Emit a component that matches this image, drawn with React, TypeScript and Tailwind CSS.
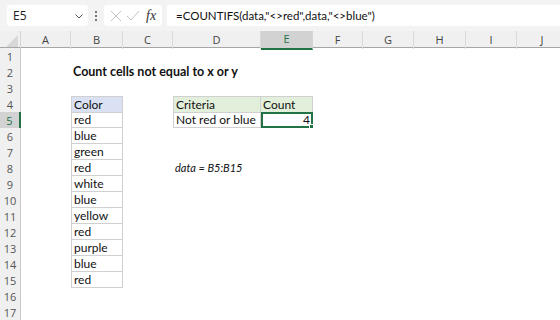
import React from "react";

const cols = ["A", "B", "C", "D", "E", "F", "G", "H", "I", "J"];
const colors = ["red", "blue", "green", "red", "white", "blue", "yellow", "red", "purple", "blue", "red"];

const cellFont = { fontFamily: "Lato, 'Open Sans', sans-serif" };

function Toolbar() {
  return (
    <div className="flex h-[31px] items-center bg-[#f3f3f3] pl-[7px]" style={{ fontFamily: "'Open Sans', 'Noto Sans', sans-serif" }}>
      {/* Name box */}
      <div className="flex h-[21px] w-[81px] items-center justify-between rounded-[3px] bg-white pl-[6px] pr-[4px] text-[12px] text-[#222]">
        <span>E5</span>
        <svg width="10" height="10" viewBox="0 0 10 10" className="text-[#555]">
          <path d="M1.5 3.5 L5 7 L8.5 3.5" fill="none" stroke="currentColor" strokeWidth="1" />
        </svg>
      </div>
      {/* dots */}
      <div className="flex w-[16px] flex-col items-center gap-[2px]">
        <span className="h-[2px] w-[2px] bg-[#777]" />
        <span className="h-[2px] w-[2px] bg-[#777]" />
        <span className="h-[2px] w-[2px] bg-[#777]" />
      </div>
      {/* fx box */}
      <div className="flex h-[21px] w-[58px] items-center rounded-[3px] bg-white pl-[6px]">
        <svg width="12" height="12" viewBox="0 0 12 12">
          <path d="M1 1 L11 11 M11 1 L1 11" stroke="#c4c4c4" strokeWidth="1" />
        </svg>
        <svg width="14" height="12" viewBox="0 0 14 12" className="ml-[4px]">
          <path d="M1 6 L5 10 L13 1" fill="none" stroke="#c4c4c4" strokeWidth="1" />
        </svg>
        <span className="ml-[6px] text-[14px] italic text-[#333]" style={{ fontFamily: "'Liberation Serif', serif" }}>
          fx
        </span>
      </div>
      {/* formula box */}
      <div className="ml-[5px] flex h-[21px] flex-1 items-center bg-white pl-[9px] text-[11.5px] text-[#111]" style={cellFont}>
        =COUNTIFS(data,"&lt;&gt;red",data,"&lt;&gt;blue")
      </div>
    </div>
  );
}

function ColumnHeaders() {
  return (
    <div className="grid h-[17px] grid-cols-[21px_50px_52px_50px_88px_52px_50px_51px_52px_51px_51px] border-b border-[#a6a6a6] bg-[#f0f0f0] text-[11px] text-[#444]" style={{ fontFamily: "'Open Sans', 'Noto Sans', sans-serif" }}>
      <div className="relative border-r border-[#d4d4d4]">
        <svg width="12" height="12" viewBox="0 0 12 12" className="absolute bottom-[2px] right-[2px]">
          <path d="M12 0 L12 12 L0 12 Z" fill="#d8d8d8" />
        </svg>
      </div>
      {cols.map((c) =>
        c === "E" ? (
          <div key={c} className="-mb-px flex items-center justify-center border-b-2 border-r border-b-[#217346] border-r-[#d4d4d4] bg-[#d2d2d2] text-[#217346]">
            {c}
          </div>
        ) : (
          <div key={c} className="flex items-center justify-center border-r border-[#dadada]">
            {c}
          </div>
        )
      )}
    </div>
  );
}

function Row({ n }: { n: number }) {
  const bIdx = n - 5;
  return (
    <div className="grid h-[16px] grid-cols-[21px_50px_52px_50px_88px_52px_50px_51px_52px_51px_51px] text-[12px] leading-[15px] text-[#111]" style={cellFont}>
      {n === 5 ? (
        <div className="flex items-center justify-center border-r-2 border-[#217346] bg-[#d2d2d2] text-[11px] text-[#217346]" style={{ fontFamily: "'Open Sans', sans-serif" }}>
          {n}
        </div>
      ) : (
        <div className="flex items-center justify-center border-r border-[#c8c8c8] bg-[#f0f0f0] text-[11px] text-[#555]" style={{ fontFamily: "'Open Sans', sans-serif" }}>
          {n}
        </div>
      )}
      {/* A */}
      <div />
      {/* B */}
      {n === 2 ? (
        <div className="whitespace-nowrap pl-[2px] text-[12.5px] font-bold">Count cells not equal to x or y</div>
      ) : n === 4 ? (
        <div className="border border-[#d0d0d0] bg-[#d9e1f2] pl-[2px]">Color</div>
      ) : bIdx >= 0 && bIdx < colors.length ? (
        <div className="border-x border-b border-[#d0d0d0] pl-[2px]">{colors[bIdx]}</div>
      ) : (
        <div />
      )}
      {/* C */}
      <div />
      {/* D */}
      {n === 4 ? (
        <div className="border border-[#d0d0d0] bg-[#e2efda] pl-[2px]">Criteria</div>
      ) : n === 5 ? (
        <div className="border-x border-b border-[#d0d0d0] pl-[2px]">Not red or blue</div>
      ) : n === 8 ? (
        <div className="whitespace-nowrap pl-[2px] text-[11px] italic">data = B5:B15</div>
      ) : (
        <div />
      )}
      {/* E */}
      {n === 4 ? (
        <div className="border-y border-r border-[#d0d0d0] bg-[#e2efda] pl-[2px]">Count</div>
      ) : n === 5 ? (
        <div className="relative border-2 border-[#217346] pr-[1px] text-right leading-[12px]">
          4
          <span className="absolute -bottom-[3px] -right-[3px] h-[5px] w-[5px] border border-white bg-[#217346]" />
        </div>
      ) : (
        <div />
      )}
      <div />
      <div />
      <div />
      <div />
      <div />
    </div>
  );
}

export default function App() {
  return (
    <div className="h-[320px] w-[560px] overflow-hidden bg-white">
      <Toolbar />
      <ColumnHeaders />
      {Array.from({ length: 17 }, (_, i) => (
        <Row key={i} n={i + 1} />
      ))}
    </div>
  );
}
